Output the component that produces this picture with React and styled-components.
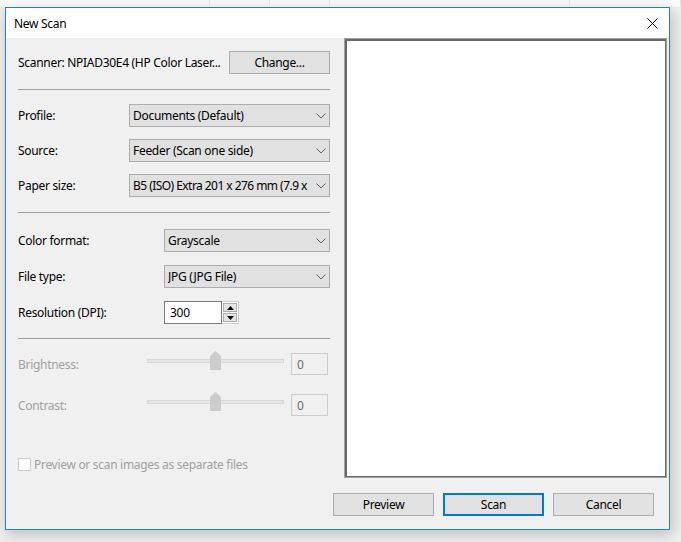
import React from 'react';
import styled, { createGlobalStyle } from 'styled-components';

const GlobalStyle = createGlobalStyle`
  html, body {
    margin: 0;
    background-color: #efefef;
  }
  body {
    font-family: "Noto Sans", "Segoe UI", Arial, sans-serif;
    font-size: 12px;
    letter-spacing: -0.3px;
    color: #000;
  }
  * {
    box-sizing: border-box;
  }
`;

const Chevron = () => (
  <svg width="10" height="6" viewBox="0 0 10 6">
    <path d="M0.5 0.5 L5 5 L9.5 0.5" fill="none" stroke="#606060" strokeWidth="1" />
  </svg>
);

const Combo = ({ value, tight }) => (
  <ComboBox>
    <ComboText $tight={tight}>{value}</ComboText>
    <ComboArrow><Chevron /></ComboArrow>
  </ComboBox>
);

const Slider = ({ label, value }) => (
  <SliderRow>
    <DisabledLabel>{label}</DisabledLabel>
    <Track>
      <Thumb>
        <svg width="11" height="19" viewBox="0 0 11 19">
          <polygon points="0,5 5.5,0 11,5 11,19 0,19" fill="#cccccc" />
        </svg>
      </Thumb>
    </Track>
    <ValueBox>{value}</ValueBox>
  </SliderRow>
);

const App = () => {
  return (
    <>
      <GlobalStyle />
      <Desktop>
        <Backdrop>
          <BackdropCell $w={210} />
          <BackdropCell $w={60} />
          <BackdropCell $w={60} />
          <BackdropCell $w={240} />
          <BackdropCell $w={111} />
        </Backdrop>
        <Window>
          <TitleBar>
            <Title>New Scan</Title>
            <Close>
              <svg width="11" height="11" viewBox="0 0 11 11">
                <path d="M0.5 0.5 L10.5 10.5 M10.5 0.5 L0.5 10.5" stroke="#000" strokeWidth="1" />
              </svg>
            </Close>
          </TitleBar>
          <Body>
            <Main>
              <Settings>
                <ScannerRow>
                  <span>Scanner: NPIAD30E4 (HP Color Laser...</span>
                  <Button $w={101}>Change...</Button>
                </ScannerRow>
                <Separator $top={16} />
                <Group $top={14} $gap={12}>
                  <Row $label={111}>
                    <span>Profile:</span>
                    <Combo value="Documents (Default)" />
                  </Row>
                  <Row $label={111}>
                    <span>Source:</span>
                    <Combo value="Feeder (Scan one side)" />
                  </Row>
                  <Row $label={111}>
                    <span>Paper size:</span>
                    <Combo value="B5 (ISO) Extra 201 x 276 mm (7.9 x" tight />
                  </Row>
                </Group>
                <Separator $top={15} />
                <Group $top={16} $gap={13}>
                  <Row $label={146}>
                    <span>Color format:</span>
                    <Combo value="Grayscale" />
                  </Row>
                  <Row $label={146}>
                    <span>File type:</span>
                    <Combo value="JPG (JPG File)" />
                  </Row>
                  <Row $label={146}>
                    <span>Resolution (DPI):</span>
                    <Spin>
                      <SpinInput>300</SpinInput>
                      <SpinButtons>
                        <SpinButton>
                          <svg width="7" height="4" viewBox="0 0 7 4"><polygon points="0,4 3.5,0 7,4" fill="#000" /></svg>
                        </SpinButton>
                        <SpinButton>
                          <svg width="7" height="4" viewBox="0 0 7 4"><polygon points="0,0 3.5,4 7,0" fill="#000" /></svg>
                        </SpinButton>
                      </SpinButtons>
                    </Spin>
                  </Row>
                </Group>
                <Separator $top={14} />
                <Group $top={14} $gap={19}>
                  <Slider label="Brightness:" value="0" />
                  <Slider label="Contrast:" value="0" />
                </Group>
                <CheckRow>
                  <CheckBox />
                  <span>Preview or scan images as separate files</span>
                </CheckRow>
              </Settings>
              <PreviewPane />
            </Main>
            <Footer>
              <Button $w={101}>Preview</Button>
              <Button $w={101} $default>Scan</Button>
              <Button $w={101}>Cancel</Button>
            </Footer>
          </Body>
        </Window>
      </Desktop>
    </>
  );
};

const Desktop = styled.div`
  width: 681px;
  height: 542px;
  overflow: hidden;
`;
const Backdrop = styled.div`
  display: flex;
  height: 7px;
  background-color: #fbfbfb;
`;
const BackdropCell = styled.div`
  width: ${({ $w }) => $w}px;
  border-right: 1px solid #e3e3e3;
`;
const Window = styled.div`
  width: 665px;
  height: 523px;
  margin-left: 5px;
  border: 1px solid #1883d7;
  background-color: #f0f0f0;
  box-shadow: 2px 4px 14px rgba(0, 0, 0, 0.22);
  display: flex;
  flex-direction: column;
`;
const TitleBar = styled.div`
  height: 30px;
  background-color: #fff;
  display: flex;
  align-items: center;
  justify-content: space-between;
  padding: 0 11px 0 8px;
`;
const Title = styled.span`
  font-size: 12px;
  margin-top: 1px;
`;
const Close = styled.span`
  display: flex;
`;
const Body = styled.div`
  flex: 1;
  display: flex;
  flex-direction: column;
  padding: 0 2px 13px 12px;
`;
const Main = styled.div`
  display: flex;
  gap: 14px;
  height: 440px;
`;
const Settings = styled.div`
  width: 312px;
  display: flex;
  flex-direction: column;
`;
const ScannerRow = styled.div`
  margin-top: 14px;
  height: 21px;
  display: flex;
  align-items: center;
  justify-content: space-between;
  white-space: nowrap;
`;
const Separator = styled.div`
  margin-top: ${({ $top }) => $top}px;
  height: 1px;
  background-color: #a0a0a0;
`;
const Group = styled.div`
  margin-top: ${({ $top }) => $top}px;
  display: flex;
  flex-direction: column;
  gap: ${({ $gap }) => $gap}px;
`;
const Row = styled.div`
  display: grid;
  grid-template-columns: ${({ $label }) => $label}px 1fr;
  align-items: center;
  height: 23px;
  white-space: nowrap;
`;
const ComboBox = styled.div`
  height: 23px;
  display: flex;
  align-items: center;
  background-color: #e1e1e1;
  border: 1px solid #adadad;
  padding: 0 0 0 3px;
  overflow: hidden;
`;
const ComboText = styled.span`
  flex: 1;
  min-width: 0;
  overflow: hidden;
  white-space: nowrap;
  letter-spacing: ${({ $tight }) => ($tight ? '-0.55px' : '-0.3px')};
`;
const ComboArrow = styled.span`
  width: 16px;
  flex-shrink: 0;
  display: flex;
  justify-content: center;
`;
const Spin = styled.div`
  display: flex;
  height: 23px;
`;
const SpinInput = styled.div`
  width: 58px;
  height: 23px;
  background-color: #fff;
  border: 1px solid #7a7a7a;
  padding: 0 0 0 5px;
  display: flex;
  align-items: center;
`;
const SpinButtons = styled.div`
  width: 17px;
  display: flex;
  flex-direction: column;
  gap: 1px;
  padding: 1px 0;
  background-color: #fff;
  border: 1px solid #cfcfcf;
  border-left: none;
`;
const SpinButton = styled.div`
  flex: 1;
  margin: 0 1px;
  background-color: #e5e5e5;
  border: 1px solid #adadad;
  display: flex;
  align-items: center;
  justify-content: center;
`;
const SliderRow = styled.div`
  display: flex;
  align-items: center;
  height: 22px;
`;
const DisabledLabel = styled.span`
  width: 129px;
  color: #a0a0a0;
`;
const Track = styled.div`
  position: relative;
  width: 137px;
  height: 4px;
  margin-top: -6px;
  background-color: #e7e7e7;
  border: 1px solid #d6d6d6;
`;
const Thumb = styled.div`
  position: absolute;
  left: 62px;
  top: -9px;
  display: flex;
`;
const ValueBox = styled.div`
  margin-left: 7px;
  width: 37px;
  height: 22px;
  border: 1px solid #cccccc;
  color: #6d6d6d;
  padding-left: 5px;
  display: flex;
  align-items: center;
`;
const CheckRow = styled.div`
  margin-top: 42px;
  display: flex;
  align-items: center;
  gap: 3px;
  color: #a0a0a0;
  height: 13px;
  white-space: nowrap;
`;
const CheckBox = styled.span`
  width: 13px;
  height: 13px;
  background-color: #fff;
  border: 1px solid #cccccc;
`;
const PreviewPane = styled.div`
  width: 323px;
  height: 440px;
  background-color: #fff;
  border: 1px solid #a0a0a0;
  box-shadow: inset 1px 1px 0 #696969, inset 2px 2px 0 #696969, inset -1px -1px 0 #696969;
`;
const Footer = styled.div`
  margin-top: 15px;
  display: flex;
  justify-content: flex-end;
  gap: 9px;
  padding-right: 13px;
`;
const Button = styled.div`
  width: ${({ $w }) => $w}px;
  height: 23px;
  display: flex;
  align-items: center;
  justify-content: center;
  background-color: #e1e1e1;
  border: ${({ $default }) => ($default ? '2px solid #0078d7' : '1px solid #adadad')};
  white-space: nowrap;
`;

export default App;
